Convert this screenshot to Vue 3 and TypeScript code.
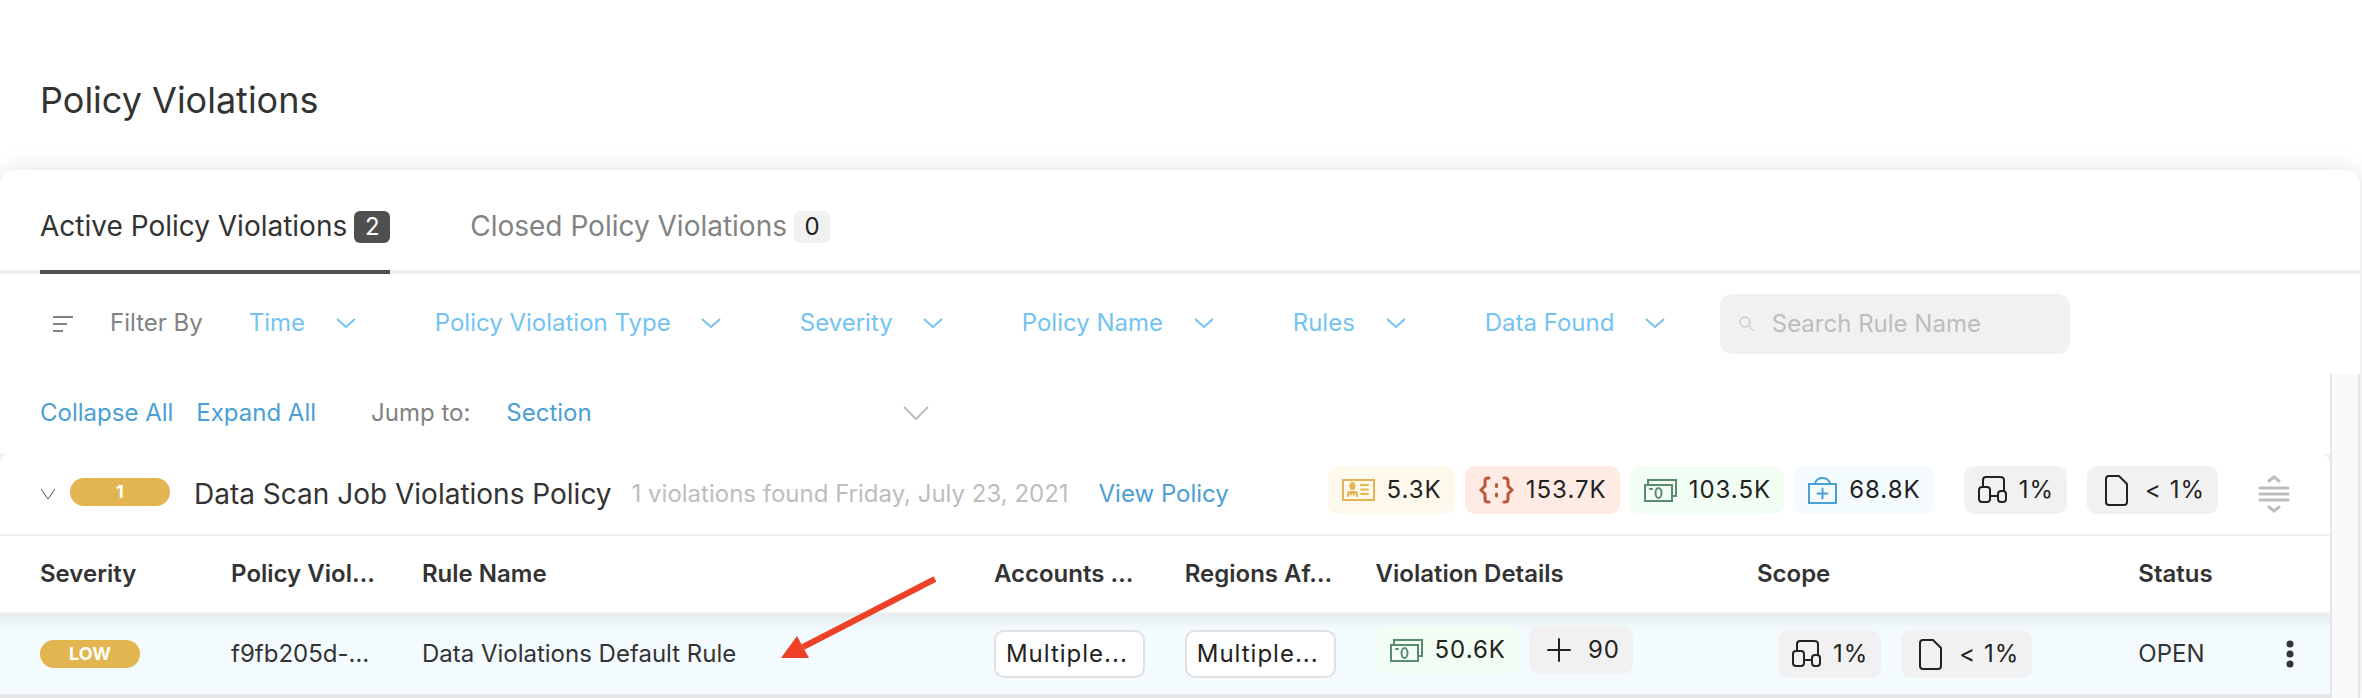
<script setup lang="ts">
import { h, type FunctionalComponent } from 'vue'

type IconName = 'id' | 'braces' | 'cash' | 'medkit' | 'assets' | 'file' | 'plus'

interface Stat {
  icon: IconName
  tone: string
  value: string
}

const paths: Record<IconName, string[]> = {
  id: ['M1 6H32V26H1Z', 'M19 11H26M19 15.500H26M19 20H26', 'M6 22V20Q6 18 8 18H13Q15 18 15 20V22M8.500 20.500L10.500 18.500L12.500 20.500'],
  braces: ['M10 4H9Q6 4 6 7V12L2 16L6 20V25Q6 28 9 28H10', 'M25 4H26Q29 4 29 7V12L33 16L29 20V25Q29 28 26 28H25', 'M17.500 10.500V12.500M17.500 20V22'],
  cash: ['M1 11H28V27H1Z', 'M4 10V6H32V22H28', 'M6 15H8'],
  medkit: ['M1 10H28V29H1Z', 'M7 9Q9 4 14.500 4Q20 4 22 9', 'M14.500 14.500V24.500M9.500 19.500H19.500'],
  assets: ['M5 12V6Q5 3 8 3H22Q26 3 26 6V16', 'M4 13H9Q12 13 12 16V25Q12 28 9 28H4Q1 28 1 25V16Q1 13 4 13Z', 'M23 17H25Q28 17 28 20V25Q28 28 25 28H23Q20 28 20 25V20Q20 17 23 17Z', 'M12 22H20'],
  file: ['M4 1H14L22 9V27Q22 30 19 30H4Q1 30 1 27V4Q1 1 4 1Z'],
  plus: ['M12 1V23M1 12H23'],
}

const boxes: Record<IconName, [number, number]> = {
  id: [33, 32], braces: [35, 32], cash: [33, 32], medkit: [29, 32], assets: [29, 32], file: [23, 31], plus: [24, 24],
}

const StatIcon: FunctionalComponent<{ name: IconName }> = ({ name }) => {
  const [w, ht] = boxes[name]
  const extra = []
  if (name === 'id') extra.push(h('ellipse', { cx: 10.5, cy: 12, rx: 3, ry: 4, fill: 'currentColor', stroke: 'none' }))
  if (name === 'cash') extra.push(h('ellipse', { cx: 14.5, cy: 19, rx: 3, ry: 5 }))
  return h(
    'svg',
    { width: w, height: ht, viewBox: `0 0 ${w} ${ht}`, 'stroke-linecap': 'round', 'aria-hidden': 'true' },
    [...paths[name].map((d) => h('path', { d })), ...extra],
  )
}

const filters = ['Time', 'Policy Violation Type', 'Severity', 'Policy Name', 'Rules', 'Data Found']

const dataStats: Stat[] = [
  { icon: 'id', tone: 'yellow', value: '5.3K' },
  { icon: 'braces', tone: 'red', value: '153.7K' },
  { icon: 'cash', tone: 'green', value: '103.5K' },
  { icon: 'medkit', tone: 'blue', value: '68.8K' },
]

const scopeStats: Stat[] = [
  { icon: 'assets', tone: 'grey', value: '1%' },
  { icon: 'file', tone: 'grey', value: '< 1%' },
]

const rowStats: Stat[] = [
  { icon: 'cash', tone: 'green', value: '50.6K' },
  { icon: 'plus', tone: 'grey', value: '90' },
]

const columns = [
  { label: 'Severity', cls: 'c-first' },
  { label: 'Policy Viol…', cls: 'c-unit' },
  { label: 'Rule Name', cls: 'c-rule' },
  { label: 'Accounts …', cls: 'c-unit' },
  { label: 'Regions Af…', cls: 'c-unit' },
  { label: 'Violation Details', cls: 'c-double' },
  { label: 'Scope', cls: 'c-double' },
  { label: 'Status', cls: 'c-status' },
  { label: '', cls: 'c-menu' },
]
</script>

<template>
  <main class="page">
    <h1>Policy Violations</h1>

    <div class="card">
      <nav class="tabs" role="tablist">
        <button class="tab active" role="tab" aria-selected="true">Active Policy Violations<span class="count">2</span></button>
        <button class="tab" role="tab" aria-selected="false">Closed Policy Violations<span class="count">0</span></button>
      </nav>

      <div class="filters">
        <svg class="filter-icon" width="22" height="18" viewBox="0 0 22 18" aria-hidden="true"><path d="M1 2H21M1 9H15M1 16H11" /></svg>
        <span class="filter-label">Filter By</span>
        <div v-for="f in filters" :key="f" class="filter">
          <select :aria-label="f"><option>{{ f }}</option></select>
          <svg width="20" height="10" viewBox="0 0 20 10" aria-hidden="true"><path d="M1 1L10 9L19 1" /></svg>
        </div>
        <label class="search">
          <svg width="18" height="18" viewBox="0 0 18 18" aria-hidden="true"><circle cx="7" cy="7" r="5" /><path d="M11 11L16 16" /></svg>
          <input type="text" placeholder="Search Rule Name" aria-label="Search Rule Name" />
        </label>
      </div>

      <div class="body">
        <div class="content">
          <div class="jump">
            <button class="link">Collapse All</button>
            <button class="link">Expand All</button>
            <label for="section">Jump to:</label>
            <div class="section-select">
              <select id="section"><option>Section</option></select>
              <svg width="26" height="14" viewBox="0 0 26 14" aria-hidden="true"><path d="M1 1L13 13L25 1" /></svg>
            </div>
          </div>

          <div class="group-back">
            <section class="group">
              <header class="group-head">
                <button class="toggle" aria-label="Collapse section">
                  <svg width="16" height="12" viewBox="0 0 16 12"><path d="M1 1L8 11L15 1" /></svg>
                </button>
                <span class="pill">1</span>
                <h2>Data Scan Job Violations Policy</h2>
                <span class="found">1 violations found Friday, July 23, 2021</span>
                <a href="#policy">View Policy</a>
                <div class="stats data">
                  <span v-for="s in dataStats" :key="s.value" class="stat" :class="s.tone"><StatIcon :name="s.icon" />{{ s.value }}</span>
                </div>
                <div class="stats scope">
                  <span v-for="s in scopeStats" :key="s.value" class="stat" :class="[s.tone, s.icon]"><StatIcon :name="s.icon" />{{ s.value }}</span>
                </div>
                <button class="drag" aria-label="Reorder section">
                  <svg width="32" height="40" viewBox="0 0 32 40"><path d="M11 7L16 3L21 7M2 14H30M2 20H30M2 26H30M11 33L16 37L21 33" /></svg>
                </button>
              </header>

              <table>
                <thead>
                  <tr>
                    <th v-for="c in columns" :key="c.cls + c.label" :class="c.cls" scope="col">{{ c.label }}</th>
                  </tr>
                </thead>
                <tbody>
                  <tr>
                    <td><span class="pill low">LOW</span></td>
                    <td>f9fb205d-…</td>
                    <td>Data Violations Default Rule</td>
                    <td><button class="multi">Multiple...</button></td>
                    <td><button class="multi">Multiple...</button></td>
                    <td>
                      <div class="stats row-data">
                        <span v-for="s in rowStats" :key="s.value" class="stat" :class="[s.tone, s.icon]"><StatIcon :name="s.icon" />{{ s.value }}</span>
                      </div>
                    </td>
                    <td>
                      <div class="stats scope row-scope">
                        <span v-for="s in scopeStats" :key="s.value" class="stat" :class="[s.tone, s.icon]"><StatIcon :name="s.icon" />{{ s.value }}</span>
                      </div>
                    </td>
                    <td>OPEN</td>
                    <td class="menu-cell">
                      <button class="menu" aria-label="Row actions">
                        <svg width="8" height="28" viewBox="0 0 8 28"><circle cx="4" cy="4" r="3.500" /><circle cx="4" cy="14" r="3.500" /><circle cx="4" cy="24" r="3.500" /></svg>
                      </button>
                    </td>
                  </tr>
                </tbody>
              </table>

              <svg class="pointer" width="160" height="88" viewBox="0 0 160 88" aria-hidden="true">
                <path class="shaft" d="M154 4L22 72" />
                <path class="head" d="M0 83L16 61L28 83Z" />
              </svg>
            </section>
          </div>
        </div>
        <div class="gutter"></div>
      </div>
    </div>
  </main>
</template>

<style>
body {
  margin: 0;
  background: #fff;
}
</style>

<style scoped>
* {
  box-sizing: border-box;
}
.page {
  height: 100vh;
  overflow: hidden;
  padding-top: 76px;
  font-family: Inter, "Liberation Sans", sans-serif;
  font-size: 24px;
  line-height: 32px;
  color: #333;
}
button,
select,
input {
  font: inherit;
  color: inherit;
  margin: 0;
  padding: 0;
  border: 0;
  background: none;
}
svg {
  flex: none;
  fill: none;
  stroke: currentColor;
  stroke-width: 2;
}
h1 {
  margin: 0 40px 46px;
  font-size: 36px;
  line-height: 48px;
  font-weight: 400;
}
.card {
  margin-right: 2px;
  border-radius: 14px 14px 0 0;
  background: #fff;
  box-shadow: 0 0 24px rgba(0, 0, 0, 0.12);
}
.tabs {
  display: flex;
  gap: 80px;
  height: 104px;
  padding: 0 40px;
  border-bottom: 4px solid #f1f1f1;
}
.tab {
  display: flex;
  align-items: center;
  gap: 7px;
  height: 104px;
  padding-top: 12px;
  border-bottom: 4px solid transparent;
  font-size: 28px;
  color: #838383;
}
.tab.active {
  color: #333;
  border-color: #4f4f4f;
}
.count {
  width: 36px;
  height: 32px;
  margin-top: 2px;
  border-radius: 6px;
  background: #f1f1f1;
  color: #222;
  font-size: 24px;
  text-align: center;
}
.active .count {
  background: #4f4f4f;
  color: #fff;
}
.filters {
  display: flex;
  align-items: center;
  height: 100px;
  padding: 0 52px;
  color: #828282;
}
.filter-label {
  margin: 0 46px 0 36px;
  padding-bottom: 2px;
}
.filter {
  display: flex;
  align-items: center;
  position: relative;
  margin-right: 79px;
  padding-bottom: 2px;
  color: #74c3f0;
}
select {
  appearance: none;
  cursor: pointer;
}
.filter select {
  padding-right: 50px;
}
.filter svg {
  position: absolute;
  right: 0;
  pointer-events: none;
}
.search {
  display: flex;
  align-items: center;
  gap: 16px;
  width: 350px;
  height: 60px;
  margin-left: -24px;
  padding: 0 16px 0 18px;
  border-radius: 12px;
  background: #f1f1f1;
  color: #b9b9b9;
}
.search svg {
  stroke-width: 1;
}
.search input {
  flex: 1;
  min-width: 0;
  outline: none;
}
.search input::placeholder {
  color: #bdbdbd;
  opacity: 1;
}
.body {
  display: flex;
}
.content {
  flex: 1;
  min-width: 0;
}
.gutter {
  width: 30px;
  border: solid #e6e6e6;
  border-width: 0 2px;
  background: #fafafa;
}
.jump {
  display: flex;
  align-items: center;
  height: 80px;
  padding: 0 40px 2px;
  color: #828282;
}
.link {
  margin-right: 23px;
  color: #4a9fd5;
}
.jump label {
  margin: 0 36px 0 32px;
}
.section-select {
  display: flex;
  align-items: center;
  position: relative;
  width: 423px;
  color: #bdbdbd;
}
.section-select select {
  width: 100%;
  color: #4a9fd5;
}
.section-select svg {
  position: absolute;
  right: 0;
  pointer-events: none;
}
.group-back {
  background: #f1f1f1;
}
.group {
  position: relative;
  border-radius: 10px 10px 0 0;
  background: #fff;
}
.group-head {
  display: flex;
  align-items: center;
  height: 82px;
  padding: 0 40px;
  border-bottom: 2px solid #f1f1f1;
}
.toggle {
  display: flex;
  margin-right: 14px;
  color: #555;
}
.toggle svg {
  stroke-width: 1;
}
.pill {
  display: block;
  width: 100px;
  height: 28px;
  border-radius: 14px;
  background: #e2b550;
  color: #fff;
  font-size: 18px;
  line-height: 28px;
  font-weight: 700;
  text-align: center;
}
.group-head .pill {
  margin-bottom: 4px;
}
h2 {
  margin: 0 20px 0 24px;
  font-size: 28px;
  line-height: 36px;
  font-weight: 400;
  white-space: nowrap;
}
.found {
  margin-right: 30px;
  color: #bdbdbd;
  white-space: nowrap;
}
a {
  color: #4a9fd5;
  text-decoration: none;
  white-space: nowrap;
}
.stats {
  display: flex;
  gap: 10px;
}
.stats.data {
  margin: 0 30px 0 auto;
}
.stats.scope {
  gap: 20px;
}
.group-head .stats {
  padding-bottom: 8px;
}
.stat {
  display: flex;
  align-items: center;
  gap: 12px;
  height: 48px;
  padding: 0 13px 0 14px;
  border-radius: 10px;
  color: #222;
  letter-spacing: 1px;
  white-space: nowrap;
}
.stat.file,
.stat.plus {
  gap: 17px;
  padding-left: 18px;
}
.yellow { background: #fff8ec; }
.red { background: #fdebe4; }
.green { background: #f2fdf4; }
.blue { background: #f3fbff; }
.grey { background: #f1f1f1; }
.yellow svg { color: #e2b550; }
.red svg {
  color: #bd553d;
  stroke-width: 3;
}
.green svg { color: #5c8a70; }
.blue svg { color: #4a9fd5; }
.drag {
  display: flex;
  margin-left: 40px;
  color: #bdbdbd;
}
.drag svg {
  stroke-width: 3;
  stroke-linecap: round;
}
table {
  width: 100%;
  table-layout: fixed;
  border-collapse: separate;
  border-spacing: 0;
}
th,
td {
  padding: 0 20px;
  text-align: left;
  white-space: nowrap;
}
th:first-child,
td:first-child {
  padding-left: 40px;
}
th {
  height: 78px;
  border-bottom: 2px solid #f1f1f1;
  font-weight: 600;
}
.c-first { width: 9.06%; }
.c-unit { width: 8.19%; }
.c-rule { width: 24.55%; }
.c-double { width: 16.37%; }
.c-status { width: 5.4%; }
td {
  height: 84px;
  border-bottom: 4px solid #e6e6e6;
  background: linear-gradient(#e6edf1, #f3fbff 16px);
}
.multi {
  display: block;
  width: 100%;
  height: 48px;
  padding-left: 10px;
  border: 2px solid #e0e0e0;
  border-radius: 10px;
  background: #fff;
  color: #222;
  letter-spacing: 1px;
  text-align: left;
}
.row-data {
  padding-bottom: 8px;
}
.row-scope {
  padding-left: 21px;
}
td.menu-cell {
  padding: 0 36px;
}
.menu {
  display: flex;
  margin-left: auto;
}
.menu svg {
  fill: #333;
  stroke: none;
}
.pointer {
  position: absolute;
  top: 121px;
  left: 781px;
  pointer-events: none;
}
.shaft {
  stroke: #ee4127;
  stroke-width: 6;
}
.head {
  fill: #ee4127;
  stroke: none;
}
</style>
